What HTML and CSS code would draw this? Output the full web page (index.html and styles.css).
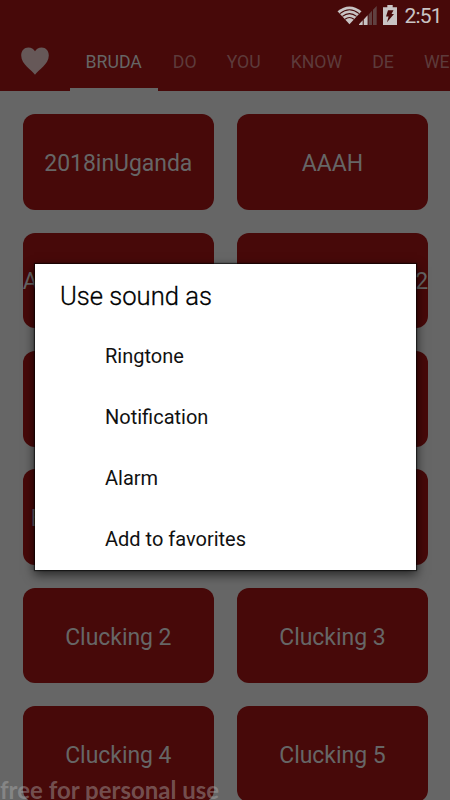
FILE: index.html
```html
<!DOCTYPE html>
<html lang="en">
<head>
<meta charset="utf-8">
<meta name="viewport" content="width=device-width">
<title>Sounds</title>
<link rel="stylesheet" href="styles.css">
</head>
<body>
<div class="screen">
  <header class="appbar">
    <div class="status">
      <svg class="wifi" width="25" height="20" viewBox="0 0 26 20">
        <path d="M.5 6.2Q13-4 25.5 6.2L13 19.5Z" fill="#c9c4c4"/>
        <path d="M3 8.5Q13 .6 23 8.5M5.6 11.5Q13 5.7 20.4 11.5M8.3 14.4Q13 10.8 17.7 14.4" fill="none" stroke="#470909" stroke-width="1.1"/>
      </svg>
      <svg class="signal" width="18" height="19" viewBox="0 0 18 19">
        <path d="M0 19V18.3L3.7 14.3V19ZM4.7 19V13.4L8.6 9.3V19Z" fill="#c9c4c4"/>
        <path d="M9.6 19V8.4L13 4.8V19ZM14 19V3.8L17.7 0V19Z" fill="#604141"/>
      </svg>
      <svg class="battery" width="14" height="20" viewBox="0 0 14 20">
        <path d="M4.3 0H9.7V2.2H14V20H0V2.2H4.3Z" fill="#c9c4c4"/>
        <path d="M5 5.2H10.5L8.5 9H11L4 17.2L5.6 11.4H3Z" fill="#470909"/>
      </svg>
      <span class="clock">2:51</span>
    </div>
    <nav class="tabs">
      <div class="tab-heart">
        <svg width="28" height="28" viewBox="0 0 28 28"><path d="M14 27.8C11 22.8 .2 17.6 .2 8.4C.2 3.5 3.2 .4 7.3 .4C10.4 .4 12.6 1.9 14 4.3C15.4 1.9 17.6 .4 20.7 .4C24.8 .4 27.8 3.5 27.8 8.4C27.8 17.6 17 22.8 14 27.8Z" fill="#665858"/></svg>
      </div>
      <div class="tab active">BRUDA</div>
      <div class="tab">DO</div>
      <div class="tab">YOU</div>
      <div class="tab">KNOW</div>
      <div class="tab">DE</div>
      <div class="tab">WE</div>
    </nav>
  </header>
  <main class="grid">
    <div class="card">2018inUganda</div>
    <div class="card">AAAH</div>
    <div class="card start">A</div>
    <div class="card end">2</div>
    <div class="card"></div>
    <div class="card"></div>
    <div class="card start inset">B</div>
    <div class="card"></div>
    <div class="card">Clucking 2</div>
    <div class="card">Clucking 3</div>
    <div class="card">Clucking 4</div>
    <div class="card">Clucking 5</div>
  </main>
  <section class="dialog">
    <h1>Use sound as</h1>
    <ul>
      <li>Ringtone</li>
      <li>Notification</li>
      <li>Alarm</li>
      <li>Add to favorites</li>
    </ul>
  </section>
  <div class="watermark">free for personal use</div>
</div>
</body>
</html>
```
FILE: styles.css
```css
* { box-sizing: border-box; }
body { margin: 0; font-family: Roboto, sans-serif; background: #666; }
.screen { position: relative; width: 450px; height: 800px; overflow: hidden; background: #666; }
.appbar { height: 91px; background: #470909; }
.status { height: 32px; display: flex; align-items: flex-start; padding-left: 337px; }
.status svg { flex: none; }
.wifi { margin-top: 5px; }
.signal { margin: 6px 0 0 -3px; }
.battery { margin: 5px 0 0 6px; }
.clock { margin: 4px 0 0 7.5px; font-size: 21px; letter-spacing: -.8px; line-height: 25px; color: #c9c4c4; }
.tabs { height: 59px; display: flex; white-space: nowrap; }
.tab-heart { flex: none; width: 70px; padding: 15px 0 0 21px; }
.tab { flex: none; padding: 0 15px; line-height: 60px; font-size: 17.7px; color: #5d3b3b; }
.tab.active { color: #666; padding: 0 16px 0 15.5px; border-bottom: 3px solid #666; }
.grid { display: grid; grid-template-columns: 191.3px 191.3px; grid-auto-rows: 95.6px; gap: 22.8px; padding: 23.2px 0 0 22.7px; }
.card { display: flex; align-items: center; justify-content: center; padding-top: 3px; border-radius: 12px; background: #470909; color: #666; font-size: 23px; line-height: 27px; letter-spacing: -.05px; white-space: nowrap; }
.card.start { justify-content: flex-start; }
.card.end { justify-content: flex-end; }
.card.inset { padding-left: 8px; }
.dialog { position: absolute; left: 35px; top: 264px; width: 381px; height: 306px; background: #fff; color: #111; box-shadow: 0 0 1px 1px rgba(0,0,0,.55), 0 4px 10px 1px rgba(0,0,0,.6); }
.dialog h1 { margin: 0; padding-left: 25px; font-size: 25.6px; font-weight: 300; color: #000; -webkit-text-stroke: .3px #000; line-height: 65px; height: 62px; }
.dialog ul { margin: 0; padding: 0 0 0 70px; list-style: none; }
.dialog li { height: 61px; line-height: 61px; font-size: 20px; }
.watermark { position: absolute; left: 0; bottom: -5px; font: 700 24px/30px Lato, sans-serif; color: rgba(180,180,180,.42); white-space: nowrap; }
```
